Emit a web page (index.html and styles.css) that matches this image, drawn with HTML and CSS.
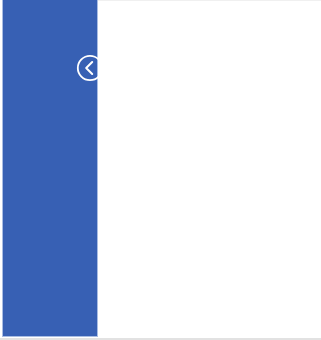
FILE: index.html
```html
<!DOCTYPE html>
<html>
<head>
<meta charset="utf-8">
<link rel="stylesheet" href="styles.css">
</head>
<body>
<div class="app">
  <aside class="sidebar">
    <button class="toggle" aria-label="Collapse">
      <svg width="28" height="28" viewBox="0 0 28 28">
        <circle cx="14" cy="14" r="12.2" fill="none" stroke="#fff" stroke-width="1.8"/>
        <path d="M16.2 8 L10.2 14 L16.2 20" fill="none" stroke="#fff" stroke-width="2" stroke-linecap="round" stroke-linejoin="round"/>
      </svg>
    </button>
  </aside>
  <main class="main"></main>
</div>
</body>
</html>
```
FILE: styles.css
```css
html, body {
  margin: 0;
  padding: 0;
  background: #fff;
  font-family: "Liberation Sans", Arial, sans-serif;
}
.app {
  display: flex;
  width: 321px;
  height: 340px;
  padding-left: 3px;
  box-sizing: border-box;
  border-bottom: 2px solid #e2e2e2;
}
.sidebar {
  position: relative;
  width: 94px;
  height: 336px;
  background: #3760b4;
  box-shadow: 0 0 0 1px #a9bde3;
  flex: none;
}
.toggle {
  position: absolute;
  left: 73px;
  top: 54px;
  width: 28px;
  height: 28px;
  padding: 0;
  border: 0;
  background: transparent;
  display: flex;
}
.main {
  flex: 1;
  border-top: 1px solid #f0f0f0;
  height: 336px;
  box-sizing: border-box;
}
```
